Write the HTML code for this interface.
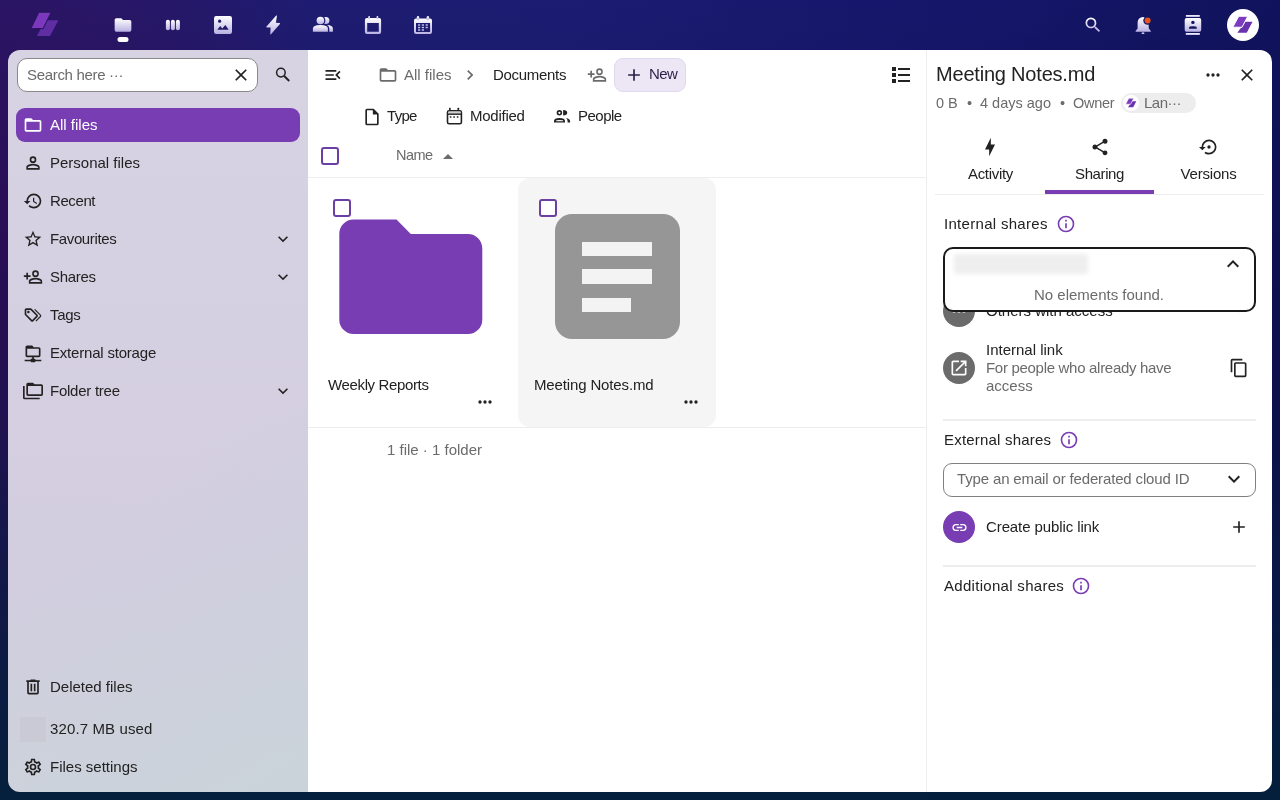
<!DOCTYPE html>
<html><head><meta charset="utf-8">
<style>
*{box-sizing:border-box;margin:0;padding:0}
html,body{width:1280px;height:800px;overflow:hidden}
body{font-family:"Liberation Sans",sans-serif;font-size:15px;color:#222;position:relative;
background:
 linear-gradient(180deg,rgba(0,0,0,0) 0%,rgba(8,2,30,.25) 45%,rgba(3,32,58,.95) 100%),
 radial-gradient(ellipse 330px 480px at 0px 230px,rgba(48,16,96,1) 0%,rgba(44,20,100,.8) 45%,rgba(30,28,112,0) 100%),
 linear-gradient(90deg,#241866 0%,#1e1c72 25%,#1b1c72 45%,#15166a 75%,#10135c 100%);}
.a{position:absolute}
.t{position:absolute;white-space:nowrap;line-height:20px;will-change:transform}
svg{display:block}
.hi{position:absolute}
#nav{position:absolute;left:8px;top:50px;width:300px;height:742px;background:linear-gradient(150deg,rgba(200,212,218,0) 55%,rgba(200,212,218,.75) 100%),linear-gradient(180deg,#d8d3e3 0%,#d5d0e1 40%,#d3cde0 65%,#d0d0dc 100%);border-radius:12px 0 0 12px}
#main{position:absolute;left:308px;top:50px;width:618px;height:742px;background:#fff}
#side{position:absolute;left:926px;top:50px;width:346px;height:742px;background:#fff;border-left:1px solid #ededed;border-radius:0 12px 12px 0}
.navi{position:absolute;left:16px;width:284px;height:34px;border-radius:9px}
.navi .ic{position:absolute;left:6px;top:7px}
.navi .lb{position:absolute;left:34px;top:7px;line-height:20px;white-space:nowrap;color:#222}
.chev{position:absolute;right:8px;top:7px}
.grey{color:#6b6b6b}
</style></head><body>
<!-- HEADER -->
<svg class="hi" style="left:0;top:0" width="1280" height="50">
<defs>
<linearGradient id="hg" x1="0" y1="0" x2="0" y2="1"><stop offset="0" stop-color="#ffffff"/><stop offset="1" stop-color="#b9b1e2"/></linearGradient>
<linearGradient id="lg" x1="0" y1="0" x2="1" y2="1"><stop offset="0" stop-color="#8a3fd0"/><stop offset="1" stop-color="#6a34b0"/></linearGradient>
</defs>

<!-- logo -->
<polygon points="45.3,20.2 58.4,20.2 50,36 36.9,36" fill="#6a33ae" opacity=".85"/>
<polygon points="38.7,12.2 51.4,12.2 43,28.6 30.8,28.6" fill="#8a3fcc" opacity=".85" stroke="#2a1660" stroke-width="1.2"/>
<!-- files -->
<path transform="translate(113,15) scale(.8333)" d="M10,4H4C2.89,4 2,4.89 2,6V18A2,2 0 0,0 4,20H20A2,2 0 0,0 22,18V8C22,6.89 21.1,6 20,6H12L10,4Z" fill="url(#hg)"/>
<rect x="117.5" y="37" width="11" height="5" rx="2.5" fill="#fff"/>
<!-- deck -->
<g fill="url(#hg)"><rect x="165.9" y="19.8" width="4" height="10.4" rx="2"/><rect x="170.9" y="19.8" width="4" height="10.4" rx="2"/><rect x="175.9" y="19.8" width="4" height="10.4" rx="2"/></g>
<!-- photos -->
<mask id="mph"><rect x="210" y="12" width="26" height="26" fill="#fff"/><circle cx="219.6" cy="21.2" r="1.6" fill="#000"/><path d="M217.3,29.8 L220.2,25.9 L222.3,28.4 L225.3,24.9 L228.7,29.8Z" fill="#000"/></mask>
<rect x="214" y="16" width="18" height="18" rx="2.2" fill="url(#hg)" mask="url(#mph)"/>
<!-- activity -->
<path d="M276.2,15.6 Q277,15.2 276.9,16.3 L275.9,22.8 L279.6,23 Q280.5,23.2 279.9,24 L271,34.2 Q270.2,34.8 270.3,33.8 L270.6,27.6 L266.8,27.5 Q265.9,27.3 266.5,26.6 Z" fill="url(#hg)"/>
<!-- contacts -->
<mask id="mct"><rect x="305" y="10" width="35" height="30" fill="#fff"/><circle cx="320.4" cy="20.5" r="5" fill="#000"/><path d="M311.5,32.5 L311.5,28.5 Q311.5,23.8 320.4,23.8 Q329.3,23.8 329.3,28.5 L329.3,32.5Z" fill="#000"/></mask>
<g fill="url(#hg)">
<circle cx="320.4" cy="20.5" r="3.8"/>
<path d="M312.9,31.8 L312.9,28.5 Q312.9,25 320.4,25 Q327.9,25 327.9,28.5 L327.9,31.8Z"/>
<g mask="url(#mct)"><circle cx="325.8" cy="20.5" r="3.6"/><path d="M320,31.8 L320,28.5 Q320,25 326.5,25 Q332.9,25 332.9,28.5 L332.9,31.8Z"/></g>
</g>
<!-- calendar -->
<path fill="url(#hg)" fill-rule="evenodd" d="M366.9,17.9 H379.1 Q381.1,17.9 381.1,19.9 V32 Q381.1,34 379.1,34 H366.9 Q364.9,34 364.9,32 V19.9 Q364.9,17.9 366.9,17.9Z M367.2,23.1 V31.75 H378.8 V23.1Z"/>
<rect x="368.2" y="16" width="1.8" height="3" rx=".9" fill="url(#hg)"/><rect x="376.5" y="16" width="1.8" height="3" rx=".9" fill="url(#hg)"/>
<!-- calendar 2 -->
<path fill="url(#hg)" fill-rule="evenodd" d="M416,18.6 H430 Q432,18.6 432,20.6 V32 Q432,34 430,34 H416 Q414,34 414,32 V20.6 Q414,18.6 416,18.6Z M416,22.9 V31.9 H430.1 V22.9Z"/>
<rect x="416.8" y="16" width="2.4" height="4.3" rx="1.2" fill="url(#hg)"/><rect x="426.7" y="16" width="2.4" height="4.3" rx="1.2" fill="url(#hg)"/>
<g fill="#c8c4ee"><rect x="418" y="24.3" width="2.2" height="1.4"/><rect x="421.8" y="24.3" width="2.2" height="1.4"/><rect x="425.6" y="24.3" width="2.2" height="1.4"/><rect x="418" y="26.8" width="2.2" height="1.4"/><rect x="421.8" y="26.8" width="2.2" height="1.4"/><rect x="425.6" y="26.8" width="2.2" height="1.4"/><rect x="418" y="29.3" width="2.2" height="1.4"/><rect x="421.8" y="29.3" width="2.2" height="1.4"/></g>
<!-- search -->
<path transform="translate(1083,15) scale(.8333)" d="M9.5,3A6.5,6.5 0 0,1 16,9.5C16,11.11 15.41,12.59 14.44,13.73L14.71,14H15.5L20.5,19L19,20.5L14,15.5V14.71L13.73,14.44C12.59,15.41 11.11,16 9.5,16A6.5,6.5 0 0,1 3,9.5A6.5,6.5 0 0,1 9.5,3M9.5,5C7,5 5,7 5,9.5C5,12 7,14 9.5,14C12,14 14,12 14,9.5C14,7 12,5 9.5,5Z" fill="url(#hg)"/>
<!-- bell -->
<mask id="mbl"><rect x="1125" y="10" width="35" height="30" fill="#fff"/><circle cx="1147.6" cy="20.5" r="4.3" fill="#000"/></mask>
<g mask="url(#mbl)" fill="url(#hg)">
<path d="M1143,16.9 Q1145,16.9 1145.5,18.5 L1148.5,22 L1148.8,28.5 L1150.8,31 L1150.8,31.75 H1135.6 V31 L1137.6,28.5 V23 Q1137.6,18.5 1141,17.4 Q1141.8,16.9 1143,16.9Z"/>
<rect x="1141.5" y="32.4" width="3" height="1.6" rx=".8"/>
</g>
<circle cx="1147.6" cy="20.5" r="3" fill="#e9541c"/>
<!-- contacts menu -->
<mask id="mcm"><rect x="1180" y="10" width="26" height="30" fill="#fff"/><circle cx="1192.9" cy="22.4" r="1.7" fill="#000"/><path d="M1189,28.8 V27.5 Q1189,26.2 1192.9,26.2 Q1196.7,26.2 1196.7,27.5 V28.8Z" fill="#000"/></mask>
<g fill="url(#hg)">
<rect x="1185.8" y="14.9" width="14.1" height="2" rx=".6"/>
<rect x="1184.7" y="18.1" width="16.5" height="13.65" rx="1.8" mask="url(#mcm)"/>
<rect x="1185.8" y="33" width="14.1" height="2" rx=".6"/>
</g>
<!-- avatar -->
<circle cx="1243" cy="25" r="16" fill="#fff"/>
<polygon points="1245.5,21.75 1252.5,21.75 1246.75,32.75 1237.25,32.75" fill="#6a33ae"/>
<polygon points="1238.75,16.25 1247.75,16.25 1242,27.25 1232.75,27.25" fill="#7c3cc2" stroke="#fff" stroke-width="1"/>
</svg>
<!-- NAVSTART -->
<div id="nav"></div>
<div class="a" style="left:17px;top:58px;width:240.5px;height:33.5px;background:#fff;border:1px solid #8a8a8a;border-radius:10px"></div>
<div class="t" style="left:26.7px;top:65px;color:#6b6b6b;font-size:15px;letter-spacing:-.32px">Search here ···</div>
<svg class="a" style="left:231px;top:64.8px" width="20" height="20" viewBox="0 0 24 24"><path d="M19,6.41L17.59,5L12,10.59L6.41,5L5,6.41L10.59,12L5,17.59L6.41,19L12,13.41L17.59,19L19,17.59L13.41,12L19,6.41Z" fill="#222"/></svg>
<svg class="a" style="left:270px;top:62px" width="26" height="26"><circle cx="10.9" cy="10.6" r="4.3" fill="none" stroke="#222" stroke-width="1.5"/><line x1="14.2" y1="14" x2="19.2" y2="19" stroke="#222" stroke-width="2" stroke-linecap="butt"/></svg>
<div class="a" style="left:16px;top:108px;width:284px;height:34px;background:#783db3;border-radius:9px"></div>
<svg class="a" style="left:22.7px;top:115px" width="20" height="20" viewBox="0 0 24 24"><path d="M20,18H4V8H20M20,6H12L10,4H4C2.89,4 2,4.89 2,6V18A2,2 0 0,0 4,20H20A2,2 0 0,0 22,18V8C22,6.89 21.1,6 20,6Z" fill="#fff"/></svg>
<div class="t" style="left:50px;top:115px;color:#fff;font-size:15px;">All files</div>
<svg class="a" style="left:22.7px;top:153px" width="20" height="20" viewBox="0 0 24 24"><path d="M12,4A4,4 0 0,1 16,8A4,4 0 0,1 12,12A4,4 0 0,1 8,8A4,4 0 0,1 12,4M12,6A2,2 0 0,0 10,8A2,2 0 0,0 12,10A2,2 0 0,0 14,8A2,2 0 0,0 12,6M12,13C14.67,13 20,14.33 20,17V20H4V17C4,14.33 9.33,13 12,13M12,14.9C9.03,14.9 5.9,16.36 5.9,17V18.1H18.1V17C18.1,16.36 14.97,14.9 12,14.9Z" fill="#222"/></svg>
<div class="t" style="left:50px;top:153px;color:#222;font-size:15px;">Personal files</div>
<svg class="a" style="left:22.7px;top:191px" width="20" height="20" viewBox="0 0 24 24"><path d="M13.5,8H12V13L16.28,15.54L17,14.33L13.5,12.25V8M13,3A9,9 0 0,0 4,12H1L4.96,16.03L9,12H6A7,7 0 0,1 13,5A7,7 0 0,1 20,12A7,7 0 0,1 13,19C11.07,19 9.32,18.21 8.06,16.94L6.64,18.36C8.27,20 10.5,21 13,21A9,9 0 0,0 22,12A9,9 0 0,0 13,3" fill="#222"/></svg>
<div class="t" style="left:50px;top:191px;color:#222;font-size:15px;letter-spacing:-.4px">Recent</div>
<svg class="a" style="left:22.7px;top:229px" width="20" height="20" viewBox="0 0 24 24"><path d="M12,15.39L8.24,17.66L9.23,13.38L5.91,10.5L10.29,10.13L12,6.09L13.71,10.13L18.09,10.5L14.77,13.38L15.76,17.66M22,9.24L14.81,8.63L12,2L9.19,8.63L2,9.24L7.45,13.97L5.82,21L12,17.27L18.18,21L16.54,13.97L22,9.24Z" fill="#222"/></svg>
<div class="t" style="left:50px;top:229px;color:#222;font-size:15px;letter-spacing:-.37px">Favourites</div>
<svg class="a" style="left:273px;top:229px" width="20" height="20" viewBox="0 0 24 24"><path d="M7.41,8.58L12,13.17L16.59,8.58L18,10L12,16L6,10L7.41,8.58Z" fill="#222"/></svg>
<svg class="a" style="left:22.7px;top:267px" width="20" height="20" viewBox="0 0 24 24"><path d="M15,4A4,4 0 0,0 11,8A4,4 0 0,0 15,12A4,4 0 0,0 19,8A4,4 0 0,0 15,4M15,5.9C16.16,5.9 17.1,6.84 17.1,8C17.1,9.16 16.16,10.1 15,10.1A2.1,2.1 0 0,1 12.9,8A2.1,2.1 0 0,1 15,5.9M4,7V10H1V12H4V15H6V12H9V10H6V7H4M15,13C12.33,13 7,14.33 7,17V20H23V17C23,14.33 17.67,13 15,13M15,14.9C17.97,14.9 21.1,16.36 21.1,17V18.1H8.9V17C8.9,16.36 12,14.9 15,14.9Z" fill="#222"/></svg>
<div class="t" style="left:50px;top:267px;color:#222;font-size:15px;letter-spacing:-.3px">Shares</div>
<svg class="a" style="left:273px;top:267px" width="20" height="20" viewBox="0 0 24 24"><path d="M7.41,8.58L12,13.17L16.59,8.58L18,10L12,16L6,10L7.41,8.58Z" fill="#222"/></svg>
<svg class="a" style="left:22.7px;top:305px" width="20" height="20" viewBox="0 0 24 24"><path d="M6.5,10C7.3,10 8,9.3 8,8.5S7.3,7 6.5,7 5,7.7 5,8.5 5.7,10 6.5,10M9,6L16,13L11,18L4,11V6H9M9,4H4C2.9,4 2,4.9 2,6V11C2,11.6 2.2,12.1 2.6,12.4L9.6,19.4C9.9,19.8 10.4,20 11,20C11.6,20 12.1,19.8 12.4,19.4L17.4,14.4C17.8,14 18,13.5 18,13C18,12.4 17.8,11.9 17.4,11.6L10.4,4.6C10.1,4.2 9.6,4 9,4M13.5,5.7L14.5,4.7L21.4,11.6C21.8,12 22,12.5 22,13C22,13.5 21.8,14 21.4,14.4L16,19.8L15,18.8L20.7,13L13.5,5.7Z" fill="#222"/></svg>
<div class="t" style="left:50px;top:305px;color:#222;font-size:15px;letter-spacing:-.3px">Tags</div>
<svg class="a" style="left:22.7px;top:343px" width="20" height="20" viewBox="0 0 24 24"><path d="M15 20C15 19.45 14.55 19 14 19H13V17H19C20.11 17 21 16.11 21 15V7C21 5.89 20.1 5 19 5H13L11 3H5C3.89 3 3 3.89 3 5V15C3 16.11 3.89 17 5 17H11V19H10C9.45 19 9 19.45 9 20H2V22H9C9 22.55 9.45 23 10 23H14C14.55 23 15 22.55 15 22H22V20H15M5 15V7H19V15H5Z" fill="#222"/></svg>
<div class="t" style="left:50px;top:343px;color:#222;font-size:15px;letter-spacing:-.2px">External storage</div>
<svg class="a" style="left:22.7px;top:381px" width="20" height="20" viewBox="0 0 24 24"><path d="M22,4A2,2 0 0,1 24,6V16A2,2 0 0,1 22,18H6A2,2 0 0,1 4,16V4A2,2 0 0,1 6,2H12L14,4H22M2,6V20H20V22H2A2,2 0 0,1 0,20V11H0V6H2M6,6V16H22V6H6Z" fill="#222"/></svg>
<div class="t" style="left:50px;top:381px;color:#222;font-size:15px;letter-spacing:-.25px">Folder tree</div>
<svg class="a" style="left:273px;top:381px" width="20" height="20" viewBox="0 0 24 24"><path d="M7.41,8.58L12,13.17L16.59,8.58L18,10L12,16L6,10L7.41,8.58Z" fill="#222"/></svg>
<svg class="a" style="left:22.7px;top:677px" width="20" height="20" viewBox="0 0 24 24"><path d="M9,3V4H4V6H5V19A2,2 0 0,0 7,21H17A2,2 0 0,0 19,19V6H20V4H15V3H9M7,6H17V19H7V6M9,8V17H11V8H9M13,8V17H15V8H13Z" fill="#222"/></svg>
<div class="t" style="left:50px;top:677px;color:#222;font-size:15px;">Deleted files</div>
<div class="a" style="left:20px;top:717px;width:26px;height:25px;background:rgba(200,200,210,.7)"></div>
<div class="t" style="left:50px;top:719px;color:#222;font-size:15px;letter-spacing:.12px">320.7 MB used</div>
<svg class="a" style="left:22.8px;top:757px" width="20" height="20" viewBox="0 0 24 24"><path d="M12,8A4,4 0 0,1 16,12A4,4 0 0,1 12,16A4,4 0 0,1 8,12A4,4 0 0,1 12,8M12,10A2,2 0 0,0 10,12A2,2 0 0,0 12,14A2,2 0 0,0 14,12A2,2 0 0,0 12,10M10,22C9.75,22 9.54,21.82 9.5,21.58L9.13,18.93C8.5,18.68 7.96,18.34 7.44,17.94L4.95,18.95C4.73,19.03 4.46,18.95 4.34,18.73L2.34,15.27C2.21,15.05 2.27,14.78 2.46,14.63L4.57,12.97L4.5,12L4.57,11L2.46,9.37C2.27,9.22 2.21,8.95 2.34,8.73L4.34,5.27C4.46,5.05 4.73,4.96 4.95,5.05L7.44,6.05C7.96,5.66 8.5,5.32 9.13,5.07L9.5,2.42C9.54,2.18 9.75,2 10,2H14C14.25,2 14.46,2.18 14.5,2.42L14.87,5.07C15.5,5.32 16.04,5.66 16.56,6.05L19.05,5.05C19.27,4.96 19.54,5.05 19.66,5.27L21.66,8.73C21.79,8.95 21.73,9.22 21.54,9.37L19.43,11L19.5,12L19.43,13L21.54,14.63C21.73,14.78 21.79,15.05 21.66,15.27L19.66,18.73C19.54,18.95 19.27,19.04 19.05,18.95L16.56,17.95C16.04,18.34 15.5,18.68 14.87,18.93L14.5,21.58C14.46,21.82 14.25,22 14,22H10M11.25,4L10.88,6.61C9.68,6.86 8.62,7.5 7.85,8.39L5.44,7.35L4.69,8.65L6.8,10.2C6.4,11.37 6.4,12.64 6.8,13.8L4.68,15.36L5.43,16.66L7.86,15.62C8.63,16.5 9.68,17.14 10.87,17.38L11.24,20H12.76L13.13,17.39C14.32,17.14 15.37,16.5 16.14,15.62L18.57,16.66L19.32,15.36L17.2,13.81C17.6,12.64 17.6,11.37 17.2,10.2L19.31,8.65L18.56,7.35L16.15,8.39C15.38,7.5 14.32,6.86 13.12,6.62L12.75,4H11.25Z" fill="#222"/></svg>
<div class="t" style="left:50px;top:757px;color:#222;font-size:15px;">Files settings</div>
<!-- NAVEND -->
<!-- MAINSTART -->
<div id="main"></div>
<svg class="a" style="left:322.5px;top:64.75px" width="20" height="20" viewBox="0 0 24 24"><path d="M21,15.61L19.59,17L14.58,12L19.59,7L21,8.39L17.44,12L21,15.61M3,6H16V8H3V6M3,13V11H13V13H3M3,18V16H16V18H3Z" fill="#222"/></svg>
<svg class="a" style="left:378.3px;top:64.75px" width="20" height="20" viewBox="0 0 24 24"><path d="M20,18H4V8H20M20,6H12L10,4H4C2.89,4 2,4.89 2,6V18A2,2 0 0,0 4,20H20A2,2 0 0,0 22,18V8C22,6.89 21.1,6 20,6Z" fill="#6b6b6b"/></svg>
<div class="t" style="left:403.6px;top:65px;color:#6b6b6b;font-size:15px;">All files</div>
<svg class="a" style="left:460.2px;top:65.3px" width="20" height="20" viewBox="0 0 24 24"><path d="M8.59,16.58L13.17,12L8.59,7.41L10,6L16,12L10,18L8.59,16.58Z" fill="#6b6b6b"/></svg>
<div class="t" style="left:493.2px;top:64.5px;color:#222;font-size:15px;letter-spacing:-.3px">Documents</div>
<svg class="a" style="left:587px;top:65px" width="20" height="20" viewBox="0 0 24 24"><path d="M15,4A4,4 0 0,0 11,8A4,4 0 0,0 15,12A4,4 0 0,0 19,8A4,4 0 0,0 15,4M15,5.9C16.16,5.9 17.1,6.84 17.1,8C17.1,9.16 16.16,10.1 15,10.1A2.1,2.1 0 0,1 12.9,8A2.1,2.1 0 0,1 15,5.9M4,7V10H1V12H4V15H6V12H9V10H6V7H4M15,13C12.33,13 7,14.33 7,17V20H23V17C23,14.33 17.67,13 15,13M15,14.9C17.97,14.9 21.1,16.36 21.1,17V18.1H8.9V17C8.9,16.36 12,14.9 15,14.9Z" fill="#6b6b6b"/></svg>
<div class="a" style="left:614px;top:58px;width:72px;height:34px;background:#ede7f5;border:1px solid #e0d8ec;border-radius:9px"></div>
<svg class="a" style="left:623.7px;top:65px" width="20" height="20" viewBox="0 0 24 24"><path d="M19,13H13V19H11V13H5V11H11V5H13V11H19V13Z" fill="#2c1f48"/></svg>
<div class="t" style="left:649.2px;top:64px;color:#2c1f48;font-size:15px;letter-spacing:-.6px">New</div>
<svg class="a" style="left:888.6px;top:62.9px" width="24" height="24" viewBox="0 0 24 24"><path d="M3,4H7V8H3V4M9,5V7H21V5H9M3,10H7V14H3V10M9,11V13H21V11H9M3,16H7V20H3V16M9,17V19H21V17H9" fill="#222"/></svg>
<svg class="a" style="left:361.7px;top:106.75px" width="20" height="20" viewBox="0 0 24 24"><path d="M14,2H6A2,2 0 0,0 4,4V20A2,2 0 0,0 6,22H18A2,2 0 0,0 20,20V8L14,2M18,20H6V4H13V9H18V20Z" fill="#222"/></svg>
<div class="t" style="left:387.4px;top:105.75px;color:#222;font-size:15px;letter-spacing:-.7px">Type</div>
<svg class="a" style="left:438px;top:100px" width="40" height="34">
<rect x="9.5" y="10.8" width="13.9" height="13" rx="1.6" fill="none" stroke="#222" stroke-width="1.6"/>
<rect x="10.3" y="11.6" width="12.3" height="2.4" fill="#cfcfcf"/>
<line x1="9.5" y1="14.2" x2="23.4" y2="14.2" stroke="#222" stroke-width="1.4"/>
<rect x="11" y="7.8" width="1.6" height="3" rx=".5" fill="#222"/><rect x="19.5" y="7.8" width="1.6" height="3" rx=".5" fill="#222"/>
<rect x="11.8" y="16.2" width="1.6" height="1.6" fill="#333"/><rect x="15.3" y="16.2" width="1.6" height="1.6" fill="#333"/><rect x="18.8" y="16.2" width="1.6" height="1.6" fill="#333"/>
</svg>
<div class="t" style="left:469.5px;top:105.75px;color:#222;font-size:15px;letter-spacing:-.25px">Modified</div>
<svg class="a" style="left:545px;top:100px" width="40" height="34">
<circle cx="14.4" cy="12.85" r="1.95" fill="none" stroke="#222" stroke-width="1.6"/>
<path d="M18.1,10.1 A4.1,2.75 0 0 1 18.1,15.6 Z" fill="#222"/>
<path fill-rule="evenodd" d="M9,22.6 V21 Q9,18 14.5,18 Q20,18 20,21 V22.6 Z M11,21.2 V20.9 Q11,20.1 14.5,20.1 Q18.3,20.1 18.3,20.9 V21.2 Z" fill="#222"/>
<path d="M21.1,18.1 Q25.1,19 25.1,21.5 V22.6 H22.6 V21.5 Q22.6,19.3 21.1,18.1 Z" fill="#222"/>
</svg>
<div class="t" style="left:577.5px;top:105.75px;color:#222;font-size:15px;letter-spacing:-.5px">People</div>
<div class="a" style="left:321px;top:147px;width:18px;height:18px;border:2px solid #6b40a5;border-radius:3px;background:#fff"></div>
<div class="t" style="left:396px;top:145px;color:#6b6b6b;font-size:14.5px;letter-spacing:-.5px">Name</div>
<svg class="a" style="left:436.3px;top:144px" width="24" height="24" viewBox="0 0 24 24"><path d="M7,15L12,10L17,15H7Z" fill="#6b6b6b"/></svg>
<div class="a" style="left:308px;top:177px;width:618px;height:1px;background:#ededed"></div>
<div class="a" style="left:518px;top:178px;width:198px;height:249px;background:#f5f5f5;border-radius:12px"></div>
<svg class="a" style="left:324.9px;top:190.9px" width="171.6" height="171.6" viewBox="0 0 24 24"><path d="M10,4H4C2.89,4 2,4.89 2,6V18A2,2 0 0,0 4,20H20A2,2 0 0,0 22,18V8C22,6.89 21.1,6 20,6H12L10,4Z" fill="#783db3"/></svg>
<div class="a" style="left:333px;top:199px;width:18px;height:18px;border:2px solid #6b40a5;border-radius:3px;background:#fff"></div>
<div class="a" style="left:554.5px;top:214.2px;width:125px;height:124.5px;background:#969696;border-radius:17px"></div>
<div class="a" style="left:581.8px;top:242px;width:70.2px;height:14.2px;background:#f3f3f3"></div>
<div class="a" style="left:581.8px;top:269.4px;width:70.2px;height:14.2px;background:#f3f3f3"></div>
<div class="a" style="left:581.8px;top:297.5px;width:49.5px;height:14.2px;background:#f3f3f3"></div>
<div class="a" style="left:539px;top:199px;width:18px;height:18px;border:2px solid #6b40a5;border-radius:3px;background:#fff"></div>
<div class="t" style="left:328.2px;top:374.7px;color:#222;font-size:15px;letter-spacing:-.36px">Weekly Reports</div>
<div class="t" style="left:534.3px;top:374.7px;color:#222;font-size:15px;letter-spacing:-.14px">Meeting Notes.md</div>
<svg class="a" style="left:475px;top:391.7px" width="20" height="20" viewBox="0 0 24 24"><path d="M16,12A2,2 0 0,1 18,10A2,2 0 0,1 20,12A2,2 0 0,1 18,14A2,2 0 0,1 16,12M10,12A2,2 0 0,1 12,10A2,2 0 0,1 14,12A2,2 0 0,1 12,14A2,2 0 0,1 10,12M4,12A2,2 0 0,1 6,10A2,2 0 0,1 8,12A2,2 0 0,1 6,14A2,2 0 0,1 4,12Z" fill="#222"/></svg>
<svg class="a" style="left:681px;top:391.7px" width="20" height="20" viewBox="0 0 24 24"><path d="M16,12A2,2 0 0,1 18,10A2,2 0 0,1 20,12A2,2 0 0,1 18,14A2,2 0 0,1 16,12M10,12A2,2 0 0,1 12,10A2,2 0 0,1 14,12A2,2 0 0,1 12,14A2,2 0 0,1 10,12M4,12A2,2 0 0,1 6,10A2,2 0 0,1 8,12A2,2 0 0,1 6,14A2,2 0 0,1 4,12Z" fill="#222"/></svg>
<div class="a" style="left:308px;top:427px;width:618px;height:1px;background:#ededed"></div>
<div class="t" style="left:386.9px;top:439.5px;color:#6b6b6b;font-size:15px;">1 file · 1 folder</div>
<!-- MAINEND -->
<!-- SIDESTART -->
<div id="side"></div>
<div class="t" style="left:936.2px;top:64px;color:#222;font-size:20px;line-height:20px;letter-spacing:-.2px">Meeting Notes.md</div>
<div class="t" style="left:936.2px;top:93px;color:#6b6b6b;font-size:14.5px">0 B</div>
<div class="t" style="left:966.5px;top:93px;color:#6b6b6b;font-size:14.5px">•</div>
<div class="t" style="left:980.2px;top:93px;color:#6b6b6b;font-size:14.5px">4 days ago</div>
<div class="t" style="left:1059.5px;top:93px;color:#6b6b6b;font-size:14.5px">•</div>
<div class="t" style="left:1072.7px;top:93px;color:#6b6b6b;font-size:14.5px;letter-spacing:-.3px">Owner</div>
<div class="a" style="left:1121px;top:93px;width:75px;height:20px;background:#ededed;border-radius:10px"></div>
<svg class="a" style="left:1122.5px;top:95px" width="16" height="16"><circle cx="8" cy="8" r="8" fill="#fff"/>
<polygon points="9.4,6.2 13.3,6.2 10.2,12.3 5,12.3" fill="#6a33ae"/><polygon points="5.8,3.2 10.8,3.2 7.6,9.2 2.6,9.2" fill="#7c3cc2" stroke="#fff" stroke-width=".6"/></svg>
<div class="t" style="left:1144px;top:93px;color:#6b6b6b;font-size:15px;letter-spacing:-.5px">Lan···</div>
<svg class="a" style="left:1203px;top:65px" width="20" height="20" viewBox="0 0 24 24"><path d="M16,12A2,2 0 0,1 18,10A2,2 0 0,1 20,12A2,2 0 0,1 18,14A2,2 0 0,1 16,12M10,12A2,2 0 0,1 12,10A2,2 0 0,1 14,12A2,2 0 0,1 12,14A2,2 0 0,1 10,12M4,12A2,2 0 0,1 6,10A2,2 0 0,1 8,12A2,2 0 0,1 6,14A2,2 0 0,1 4,12Z" fill="#222"/></svg>
<svg class="a" style="left:1237px;top:65px" width="20" height="20" viewBox="0 0 24 24"><path d="M19,6.41L17.59,5L12,10.59L6.41,5L5,6.41L10.59,12L5,17.59L6.41,19L12,13.41L17.59,19L19,17.59L13.41,12L19,6.41Z" fill="#222"/></svg>
<svg class="a" style="left:980px;top:137px" width="20" height="20" viewBox="0 0 24 24"><path d="M11,15H6L13,1V9H18L11,23V15Z" fill="#222"/></svg>
<svg class="a" style="left:1090px;top:137px" width="20" height="20" viewBox="0 0 24 24"><path d="M18,16.08C17.24,16.08 16.56,16.38 16.04,16.85L8.91,12.7C8.96,12.47 9,12.24 9,12C9,11.76 8.96,11.53 8.91,11.3L15.96,7.19C16.5,7.69 17.21,8 18,8A3,3 0 0,0 21,5A3,3 0 0,0 18,2A3,3 0 0,0 15,5C15,5.24 15.04,5.47 15.09,5.7L8.04,9.81C7.5,9.31 6.79,9 6,9A3,3 0 0,0 3,12A3,3 0 0,0 6,15C6.79,15 7.5,14.69 8.04,14.19L15.16,18.34C15.11,18.55 15.08,18.77 15.08,19C15.08,20.61 16.39,21.91 18,21.91C19.61,21.91 20.92,20.61 20.92,19A2.92,2.92 0 0,0 18,16.08Z" fill="#222"/></svg>
<svg class="a" style="left:1198.5px;top:137px" width="20" height="20" viewBox="0 0 24 24"><path d="M12,3A9,9 0 0,0 3,12H0L4,16L8,12H5A7,7 0 0,1 12,5A7,7 0 0,1 19,12A7,7 0 0,1 12,19C10.5,19 9.09,18.5 7.94,17.7L6.5,19.14C8.04,20.3 9.94,21 12,21A9,9 0 0,0 21,12A9,9 0 0,0 12,3M14,12A2,2 0 0,0 12,10A2,2 0 0,0 10,12A2,2 0 0,0 12,14A2,2 0 0,0 14,12Z" fill="#222"/></svg>
<div class="t" style="left:936px;top:164px;width:109px;text-align:center;letter-spacing:-.3px">Activity</div>
<div class="t" style="left:1045px;top:164px;width:109px;text-align:center;letter-spacing:-.4px">Sharing</div>
<div class="t" style="left:1154px;top:164px;width:109px;text-align:center;letter-spacing:-.2px">Versions</div>
<div class="a" style="left:935px;top:194px;width:329px;height:1px;background:#ededed"></div>
<div class="a" style="left:1045px;top:190px;width:109px;height:4px;background:#783db3"></div>
<div class="t" style="left:943.9px;top:214px;color:#222;font-size:15px;letter-spacing:.3px">Internal shares</div>
<svg class="a" style="left:1056px;top:214px" width="20" height="20" viewBox="0 0 24 24"><path d="M11,9H13V7H11M12,20C7.59,20 4,16.41 4,12C4,7.59 7.59,4 12,4C16.41,4 20,7.59 20,12C20,16.41 16.41,20 12,20M12,2A10,10 0 0,0 2,12A10,10 0 0,0 12,22A10,10 0 0,0 22,12A10,10 0 0,0 12,2M11,17H13V11H11V17Z" fill="#783db3"/></svg>
<div class="a" style="left:943px;top:295px;width:32px;height:32px;border-radius:16px;background:#6b6b6b"></div>
<svg class="a" style="left:949px;top:301px" width="20" height="20" viewBox="0 0 24 24"><path d="M16,12A2,2 0 0,1 18,10A2,2 0 0,1 20,12A2,2 0 0,1 18,14A2,2 0 0,1 16,12M10,12A2,2 0 0,1 12,10A2,2 0 0,1 14,12A2,2 0 0,1 12,14A2,2 0 0,1 10,12M4,12A2,2 0 0,1 6,10A2,2 0 0,1 8,12A2,2 0 0,1 6,14A2,2 0 0,1 4,12Z" fill="#fff"/></svg>
<div class="t" style="left:985.5px;top:301px;color:#222;font-size:15px;">Others with access</div>
<svg class="a" style="left:1229px;top:299px" width="20" height="20" viewBox="0 0 24 24"><path d="M7.41,8.58L12,13.17L16.59,8.58L18,10L12,16L6,10L7.41,8.58Z" fill="#222"/></svg>
<div class="a" style="left:943px;top:247px;width:313px;height:65px;border:2px solid #1a1a1a;border-radius:10px;background:#fff"></div>
<div class="a" style="left:954px;top:253.5px;width:134px;height:20.5px;background:#eeeeee;filter:blur(2px);border-radius:3px"></div>
<svg class="a" style="left:1221px;top:252px" width="24" height="24" viewBox="0 0 24 24"><path d="M7.41,15.41L12,10.83L16.59,15.41L18,14L12,8L6,14L7.41,15.41Z" fill="#222"/></svg>
<div class="t" style="left:945px;top:285px;width:308px;text-align:center;color:#6b6b6b">No elements found.</div>
<div class="a" style="left:943px;top:352px;width:32px;height:32px;border-radius:16px;background:#6b6b6b"></div>
<svg class="a" style="left:949px;top:358px" width="20" height="20" viewBox="0 0 24 24"><path d="M14,3V5H17.59L7.76,14.83L9.17,16.24L19,6.41V10H21V3M19,19H5V5H12V3H5C3.89,3 3,3.9 3,5V19A2,2 0 0,0 5,21H19A2,2 0 0,0 21,19V12H19V19Z" fill="#fff"/></svg>
<div class="t" style="left:986px;top:340px;color:#222;font-size:15px;">Internal link</div>
<div class="t" style="left:986px;top:358px;color:#6b6b6b;font-size:15px;line-height:18px;top:359px;letter-spacing:-.3px">For people who already have</div>
<div class="t" style="left:986px;top:377px;color:#6b6b6b;font-size:15px;line-height:18px">access</div>
<svg class="a" style="left:1229px;top:358px" width="20" height="20" viewBox="0 0 24 24"><path d="M19,21H8V7H19M19,5H8A2,2 0 0,0 6,7V21A2,2 0 0,0 8,23H19A2,2 0 0,0 21,21V7A2,2 0 0,0 19,5M16,1H4A2,2 0 0,0 2,3V17H4V3H16V1Z" fill="#222"/></svg>
<div class="a" style="left:943px;top:419px;width:313px;height:2px;background:#ededed"></div>
<div class="t" style="left:943.9px;top:430px;color:#222;font-size:15px;letter-spacing:.2px">External shares</div>
<svg class="a" style="left:1059px;top:430px" width="20" height="20" viewBox="0 0 24 24"><path d="M11,9H13V7H11M12,20C7.59,20 4,16.41 4,12C4,7.59 7.59,4 12,4C16.41,4 20,7.59 20,12C20,16.41 16.41,20 12,20M12,2A10,10 0 0,0 2,12A10,10 0 0,0 12,22A10,10 0 0,0 22,12A10,10 0 0,0 12,2M11,17H13V11H11V17Z" fill="#783db3"/></svg>
<div class="a" style="left:943px;top:463px;width:313px;height:34px;border:1px solid #7f7f7f;border-radius:9px;background:#fff"></div>
<div class="t" style="left:956.6px;top:469px;color:#6b6b6b;font-size:15px;letter-spacing:-.15px">Type an email or federated cloud ID</div>
<svg class="a" style="left:1222px;top:467px" width="24" height="24" viewBox="0 0 24 24"><path d="M7.41,8.58L12,13.17L16.59,8.58L18,10L12,16L6,10L7.41,8.58Z" fill="#222"/></svg>
<div class="a" style="left:943px;top:511px;width:32px;height:32px;border-radius:16px;background:#783db3"></div>
<svg class="a" style="left:950.5px;top:518.5px" width="17" height="17" viewBox="0 0 24 24"><path d="M3.9,12C3.9,10.29 5.29,8.9 7,8.9H11V7H7A5,5 0 0,0 2,12A5,5 0 0,0 7,17H11V15.1H7C5.29,15.1 3.9,13.71 3.9,12M8,13H16V11H8V13M17,7H13V8.9H17C18.71,8.9 20.1,10.29 20.1,12C20.1,13.71 18.71,15.1 17,15.1H13V17H17A5,5 0 0,0 22,12A5,5 0 0,0 17,7Z" fill="#fff"/></svg>
<div class="t" style="left:985.5px;top:517px;color:#222;font-size:15px;letter-spacing:-.1px">Create public link</div>
<svg class="a" style="left:1229px;top:517px" width="20" height="20" viewBox="0 0 24 24"><path d="M19,13H13V19H11V13H5V11H11V5H13V11H19V13Z" fill="#222"/></svg>
<div class="a" style="left:943px;top:565px;width:313px;height:2px;background:#ededed"></div>
<div class="t" style="left:943.9px;top:576px;color:#222;font-size:15px;letter-spacing:.3px">Additional shares</div>
<svg class="a" style="left:1071px;top:576px" width="20" height="20" viewBox="0 0 24 24"><path d="M11,9H13V7H11M12,20C7.59,20 4,16.41 4,12C4,7.59 7.59,4 12,4C16.41,4 20,7.59 20,12C20,16.41 16.41,20 12,20M12,2A10,10 0 0,0 2,12A10,10 0 0,0 12,22A10,10 0 0,0 22,12A10,10 0 0,0 12,2M11,17H13V11H11V17Z" fill="#783db3"/></svg>
<!-- SIDEEND -->
</body></html>
